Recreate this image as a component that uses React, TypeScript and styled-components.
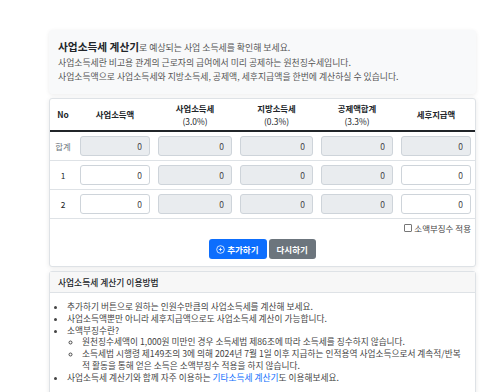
import React from "react";
import styled, { createGlobalStyle } from "styled-components";

const Global = createGlobalStyle`
  html, body { margin: 0; padding: 0; background: #fff; }
  body { font-family: "Noto Sans CJK KR", "Noto Sans", sans-serif; color: #212529; }
  * { box-sizing: border-box; }
`;

const Page = styled.div`
  padding: 30px 12px 0 49px;
  width: 488px;
  display: flex;
  flex-direction: column;
`;

const Intro = styled.div`
  background: #f8f9fa;
  border-radius: 4px;
  box-shadow: 0 1px 4px rgba(0, 0, 0, 0.08);
  padding: 8px 9px 10px;
  margin-bottom: 4px;
`;

const IntroTitle = styled.div`
  font-size: 8.9px;
  color: #555;
  line-height: 17px;
  strong { font-size: 10.7px; color: #212529; font-weight: 700; }
`;

const IntroLine = styled.div`
  font-size: 8.85px;
  color: #555;
  line-height: 14px;
`;

const Card = styled.div`
  background: #fff;
  border: 1px solid #dee2e6;
  border-radius: 3px;
  box-shadow: 0 1px 5px rgba(0, 0, 0, 0.09);
  margin-bottom: 4px;
`;

const Table = styled.table`
  width: 100%;
  border-collapse: collapse;
  table-layout: fixed;
`;

const Th = styled.th`
  font-size: 8.4px;
  font-weight: 700;
  color: #212529;
  line-height: 13px;
  height: 32px;
  padding: 0 4px;
  text-align: center;
  border-bottom: 2px solid #212529;
  span { font-weight: 400; }
`;

const Td = styled.td<{ $muted?: boolean }>`
  padding: 4px;
  height: 27px;
  border-bottom: 1px solid #dee2e6;
  font-size: 8.4px;
  line-height: 12px;
  color: ${(p) => (p.$muted ? "#6c757d" : "#212529")};
  text-align: center;
`;

const NumInput = styled.input<{ $ro?: boolean }>`
  width: 100%;
  height: 20px;
  border: 1px solid #ced4da;
  border-radius: 3px;
  background: ${(p) => (p.$ro ? "#e9ecef" : "#fff")};
  font-family: inherit;
  font-size: 8.5px;
  color: #444;
  text-align: right;
  padding: 0 7px;
  display: block;
  outline: none;
`;

const CheckRow = styled.label`
  display: flex;
  justify-content: flex-end;
  align-items: center;
  gap: 2px;
  padding: 3px 4px 0;
  font-size: 8.5px;
  line-height: 12px;
  color: #444;
`;

const Box = styled.span`
  width: 8px;
  height: 8px;
  border: 1px solid #777;
  border-radius: 1px;
  background: #fff;
  display: inline-block;
`;

const Buttons = styled.div`
  display: flex;
  justify-content: center;
  gap: 2px;
  padding: 5px 0 7px;
`;

const Btn = styled.button<{ $primary?: boolean }>`
  height: 20px;
  border: none;
  border-radius: 3px;
  background: ${(p) => (p.$primary ? "#0d6efd" : "#6c757d")};
  color: #fff;
  font-family: inherit;
  font-size: 8.5px;
  font-weight: 700;
  padding: 0 8px 0 ${(p) => (p.$primary ? "7px" : "8px")};
  display: flex;
  align-items: center;
  gap: 2px;
`;

const InfoHead = styled.div`
  background: #f7f7f7;
  border-bottom: 1px solid #dee2e6;
  height: 21px;
  padding: 0 8px;
  display: flex;
  align-items: center;
  font-size: 8.75px;
  font-weight: 500;
  color: #212529;
`;

const InfoBody = styled.div`
  padding: 8px 14px 12px 0;
`;

const List = styled.ul`
  margin: 0;
  padding-left: 17px;
  list-style: disc;
  font-size: 8.7px;
  line-height: 11.8px;
  color: #444;
  word-break: break-all;
`;

const SubList = styled.ul`
  margin: 0;
  padding-left: 15px;
  list-style: circle;
`;

const Link = styled.a`
  color: #0d6efd;
  text-decoration: none;
`;

const cols = [26, 78, 82, 81, 80, 78];

const rows: { label: string; muted: boolean; ro: boolean[] }[] = [
  { label: "합계", muted: true, ro: [true, true, true, true, true] },
  { label: "1", muted: false, ro: [false, true, true, true, false] },
  { label: "2", muted: false, ro: [false, true, true, true, false] },
];

export default function App() {
  return (
    <>
      <Global />
      <Page>
        <Intro>
          <IntroTitle>
            <strong>사업소득세 계산기</strong>로 예상되는 사업 소득세를 확인해 보세요.
          </IntroTitle>
          <IntroLine>사업소득세란 비고용 관계의 근로자의 급여에서 미리 공제하는 원천징수세입니다.</IntroLine>
          <IntroLine>사업소득액으로 사업소득세와 지방소득세, 공제액, 세후지급액을 한번에 계산하실 수 있습니다.</IntroLine>
        </Intro>
        <Card>
          <Table>
            <colgroup>
              {cols.map((w, i) => (
                <col key={i} style={{ width: w }} />
              ))}
            </colgroup>
            <thead>
              <tr>
                <Th>No</Th>
                <Th>사업소득액</Th>
                <Th>
                  사업소득세
                  <br />
                  <span>(3.0%)</span>
                </Th>
                <Th>
                  지방소득세
                  <br />
                  <span>(0.3%)</span>
                </Th>
                <Th>
                  공제액합계
                  <br />
                  <span>(3.3%)</span>
                </Th>
                <Th>세후지급액</Th>
              </tr>
            </thead>
            <tbody>
              {rows.map((r) => (
                <tr key={r.label}>
                  <Td $muted={r.muted}>{r.label}</Td>
                  {r.ro.map((ro, i) => (
                    <Td key={i}>
                      <NumInput $ro={ro} readOnly defaultValue="0" />
                    </Td>
                  ))}
                </tr>
              ))}
            </tbody>
          </Table>
          <CheckRow>
            <Box />
            소액부징수 적용
          </CheckRow>
          <Buttons>
            <Btn $primary>
              <svg width="9" height="9" viewBox="0 0 16 16" fill="none" stroke="#fff" strokeWidth="1.4">
                <circle cx="8" cy="8" r="6.8" />
                <path d="M8 5v6M5 8h6" />
              </svg>
              추가하기
            </Btn>
            <Btn>다시하기</Btn>
          </Buttons>
        </Card>
        <Card>
          <InfoHead>사업소득세 계산기 이용방법</InfoHead>
          <InfoBody>
            <List>
              <li>추가하기 버튼으로 원하는 인원수만큼의 사업소득세를 계산해 보세요.</li>
              <li>사업소득액뿐만 아니라 세후지급액으로도 사업소득세 계산이 가능합니다.</li>
              <li>
                소액부징수란?
                <SubList>
                  <li>원천징수세액이 1,000원 미만인 경우 소득세법 제86조에 따라 소득세를 징수하지 않습니다.</li>
                  <li>
                    소득세법 시행령 제149조의 3에 의해 2024년 7월 1일 이후 지급하는 인적용역 사업소득으로서 계속적/반복적 활동을 통해 얻은 소득은 소액부징수 적용을 하지 않습니다.
                  </li>
                </SubList>
              </li>
              <li>
                사업소득세 계산기와 함께 자주 이용하는 <Link href="#">기타소득세 계산기</Link>도 이용해보세요.
              </li>
            </List>
          </InfoBody>
        </Card>
      </Page>
    </>
  );
}
